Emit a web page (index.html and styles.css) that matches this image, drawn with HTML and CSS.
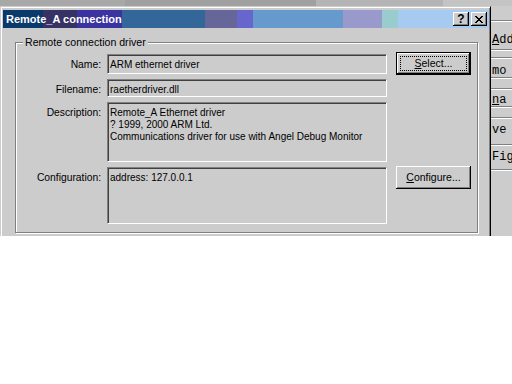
FILE: index.html
```html
<!DOCTYPE html>
<html lang="en">

<head>
    <meta charset="UTF-8">
    <meta name="viewport" content="width=device-width, initial-scale=1.0">
    <title>Remote_A connection</title>
    <link rel="stylesheet" href="styles.css">
</head>

<body>
    <div class="screen">
        <div class="topstrip"></div>
        <div class="main">
            <div class="dialog">
                <div class="titlebar">
                    <span class="title">Remote_A connection</span>
                    <div class="caption-buttons">
                        <button class="cap-btn">?</button>
                        <button class="cap-btn">
                            <svg width="8" height="7" viewBox="0 0 8 7" shape-rendering="crispEdges">
                                <path d="M0 0h2v1H0zM6 0h2v1H6zM1 1h2v1H1zM5 1h2v1H5zM2 2h4v1H2zM3 3h2v1H3zM2 4h4v1H2zM1 5h2v1H1zM5 5h2v1H5zM0 6h2v1H0zM6 6h2v1H6z" fill="#000"/>
                            </svg>
                        </button>
                    </div>
                </div>

                <div class="group">
                    <span class="group-title">Remote connection driver</span>
                    <div class="fields">
                        <label>Name:</label>
                        <div class="field">ARM ethernet driver</div>
                        <button class="btn default"><span class="focus"><u>S</u>elect...</span></button>

                        <label>Filename:</label>
                        <div class="field">raetherdriver.dll</div>

                        <label>Description:</label>
                        <div class="field multi">Remote_A Ethernet driver<br>? 1999, 2000 ARM Ltd.<br>Communications driver for use with Angel Debug Monitor</div>

                        <label>Configuration:</label>
                        <div class="field multi">address: 127.0.0.1</div>
                        <button class="btn config"><span class="plain"><u>C</u>onfigure...</span></button>
                    </div>
                </div>
            </div>

            <div class="behind">
                <div class="row r1"></div>
                <div class="row r2"><u>A</u>dd</div>
                <div class="row r3"></div>
                <div class="row r4">mo</div>
                <div class="row r5"></div>
                <div class="row r6"><u>n</u>a</div>
                <div class="row r7"></div>
                <div class="row r8">ve</div>
                <div class="row r9">Fig</div>
            </div>
        </div>
    </div>
</body>

</html>
```

FILE: styles.css
```css
body {
    margin: 0;
    background: #fff;
    font-family: "Liberation Sans", Arial, sans-serif;
    font-size: 10px;
    color: #000;
}

.screen {
    height: 236px;
    overflow: hidden;
    display: flex;
    flex-direction: column;
}

.topstrip {
    height: 6px;
    flex-shrink: 0;
    background: linear-gradient(to right,
        #a8a8a8 0 125px, #a0a0a0 125px 316px,
        #b4b4b4 316px 443px, #c4c4c4 443px);
}

.main {
    flex: 1;
    display: flex;
}

/* dialog window */
.dialog {
    width: 491px;
    flex-shrink: 0;
    box-sizing: border-box;
    background: #ccc;
    border-top: 1px solid #ccc;
    border-left: 1px solid #ccc;
    border-right: 1px solid #000;
    box-shadow: inset 1px 1px #fff, inset -1px 0 #808080;
    padding: 3px 1px 0 2px;
}

.titlebar {
    height: 18px;
    display: flex;
    align-items: center;
    justify-content: space-between;
    padding: 0 2px 0 3px;
    color: #fff;
    font-weight: bold;
    font-size: 11px;
    background: linear-gradient(to right,
        #0a3a6c 0 40px, #363264 40px 74px, #3a34a0 74px 119px,
        #336699 119px 202px, #666699 202px 234px, #6666cc 234px 250px,
        #6699cc 250px 340px, #9999cc 340px 379px, #99cccc 379px 395px,
        #a6caf0 395px);
}

.caption-buttons {
    display: flex;
    gap: 2px;
}

.cap-btn {
    width: 16px;
    height: 14px;
    padding: 0;
    border: none;
    background: #ccc;
    box-shadow: inset -1px -1px #000, inset 1px 1px #fff, inset -2px -2px #808080;
    display: flex;
    align-items: center;
    justify-content: center;
    font: bold 12px "Liberation Sans", Arial, sans-serif;
    color: #000;
}

/* group box */
.group {
    margin: 14px 11px 0 12px;
    border: 1px solid #808080;
    box-shadow: inset 1px 1px #fff, 1px 1px #fff;
    padding: 0 6px 8px 0;
}

.group-title {
    display: block;
    width: fit-content;
    margin: -7px 0 0 7px;
    padding: 0 2px;
    font-size: 10.6px;
    line-height: 13px;
    background: #ccc;
}

.fields {
    margin-top: 5px;
    display: grid;
    grid-template-columns: 91px 289px 75px;
    grid-template-rows: 20px 18px 60px 57px;
    row-gap: 5px;
}

.fields label {
    grid-column: 1;
    text-align: right;
    padding: 4px 6px 0 0;
    font-size: 10.3px;
    line-height: 13px;
}

.field {
    grid-column: 2;
    width: 280px;
    box-sizing: border-box;
    border: 1px solid;
    border-color: #808080 #fff #fff #808080;
    box-shadow: inset 1px 1px #404040;
    padding: 3px 1px 0 2px;
    line-height: 13px;
    white-space: nowrap;
    overflow: hidden;
}

.field.multi {
    padding-top: 4px;
    line-height: 12px;
}

.btn {
    grid-column: 3;
    width: 75px;
    height: 23px;
    padding: 0;
    border: none;
    background: #ccc;
    box-shadow: inset -1px -1px #000, inset 1px 1px #fff, inset -2px -2px #808080;
    font: 10.5px "Liberation Sans", Arial, sans-serif;
    color: #000;
    display: flex;
    align-items: center;
}

.btn.default {
    margin-top: -2px;
    border: 1px solid #000;
}

.btn.config {
    margin-top: -1px;
}

.focus {
    flex: 1;
    margin: 0 3px;
    border: 1px dotted #000;
    line-height: 13px;
}

.plain {
    flex: 1;
    line-height: 13px;
}

/* window behind the dialog */
.behind {
    flex: 1;
    background: #ccc;
    font: 12px "Liberation Mono", "Courier New", monospace;
    white-space: nowrap;
    overflow: hidden;
}

.row {
    border-bottom: 1px solid #808080;
    box-shadow: 0 1px #fff;
    padding-left: 1px;
}

.r1 { height: 14px; }
.r2 { height: 28px; line-height: 38px; }
.r3 { height: 7px; }
.r4 { height: 19px; line-height: 26px; }
.r5 { height: 10px; }
.r6 { height: 17px; line-height: 22px; }
.r7 { height: 10px; }
.r8 { height: 26px; line-height: 24px; }
.r9 { height: 24px; line-height: 24px; }
```
